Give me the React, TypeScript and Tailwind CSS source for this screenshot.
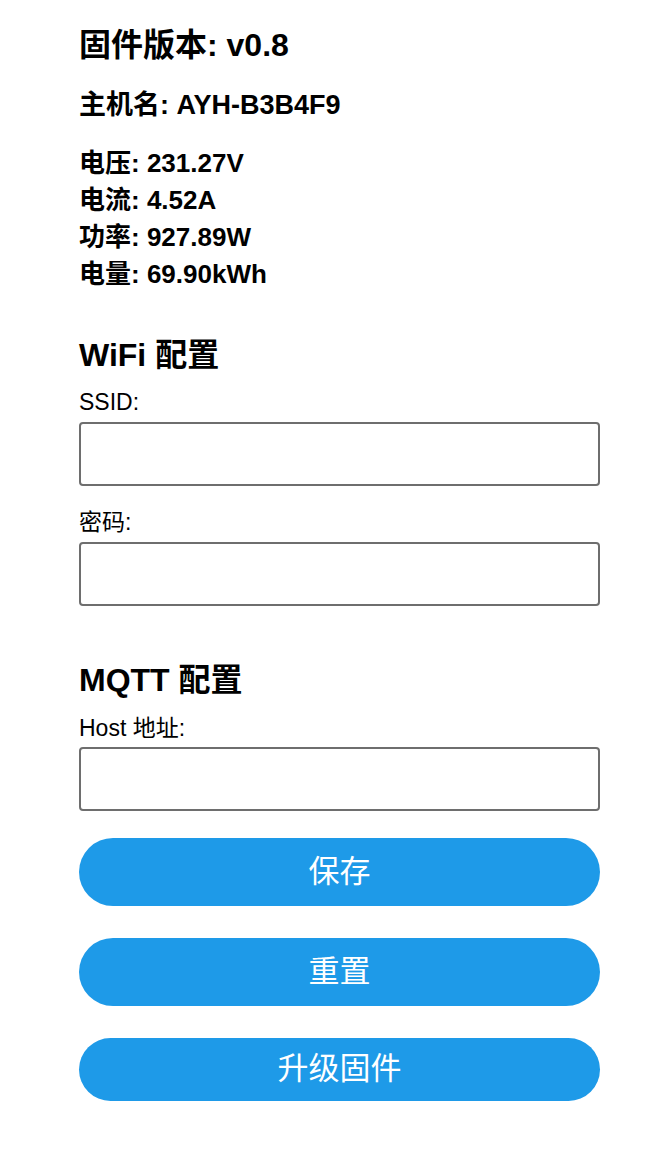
import React from 'react'

const font = { fontFamily: '"Liberation Sans", "Noto Sans CJK SC", sans-serif' }

function Field({ label, gap }: { label: string; gap: string }) {
  return (
    <div>
      <label className="block text-[23px] leading-[28px] text-black">{label}</label>
      <input
        type="text"
        className={`${gap} block h-[64px] w-full rounded-[4px] border-2 border-[#6e6e6e] bg-white px-3 text-[20px] outline-none`}
      />
    </div>
  )
}

function ActionButton({ label, height }: { label: string; height: string }) {
  return (
    <button type="button" className={`block w-full rounded-full bg-[#1e9ae8] text-[31px] text-white ${height}`}>
      {label}
    </button>
  )
}

export default function App() {
  const readings = [
    ['电压', '231.27V'],
    ['电流', '4.52A'],
    ['功率', '927.89W'],
    ['电量', '69.90kWh'],
  ]

  return (
    <div className="min-h-[1176px] bg-white text-black" style={font}>
      <div className="ml-[79px] w-[521px] pt-[25px]">
        <h1 className="text-[32px] font-bold leading-[40px]">固件版本: v0.8</h1>
        <p className="mt-[24px] text-[27px] font-bold leading-[32px]">主机名: AYH-B3B4F9</p>

        <div className="mt-[24px] text-[26px] font-bold leading-[37px]">
          {readings.map(([k, v]) => (
            <div key={k}>
              {k}: {v}
            </div>
          ))}
        </div>

        <h2 className="mt-[42px] text-[32px] font-bold leading-[40px]">WiFi 配置</h2>
        <div className="mt-[13px]">
          <Field label="SSID:" gap="mt-[6px]" />
        </div>
        <div className="mt-[22px]">
          <Field label="密码:" gap="mt-[6px]" />
        </div>

        <h2 className="mt-[54px] text-[32px] font-bold leading-[40px]">MQTT 配置</h2>
        <div className="mt-[14px]">
          <Field label="Host 地址:" gap="mt-[5px]" />
        </div>

        <div className="mt-[27px] flex flex-col gap-[32px]">
          <ActionButton label="保存" height="h-[68px]" />
          <ActionButton label="重置" height="h-[68px]" />
          <ActionButton label="升级固件" height="h-[63px]" />
        </div>
      </div>
    </div>
  )
}
